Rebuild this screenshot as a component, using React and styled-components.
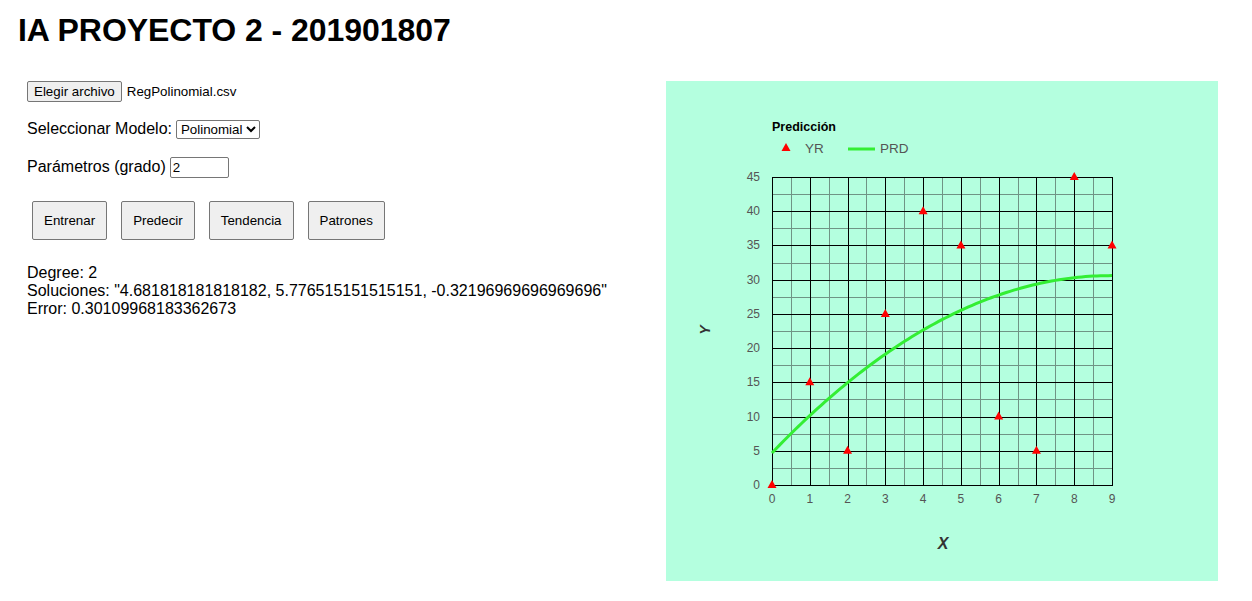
import React from 'react';
import styled, { createGlobalStyle } from 'styled-components';

const GlobalStyle = createGlobalStyle`
  body {
    margin: 0;
    background: #ffffff;
    font-family: 'Liberation Sans', Arial, sans-serif;
    color: #000;
  }
`;

const Page = styled.div`
  padding: 12px 18px 0;
`;

const Title = styled.h1`
  margin: 0;
  font-size: 32px;
  line-height: 37px;
  font-weight: bold;
  letter-spacing: -0.05px;
`;

const Main = styled.div`
  display: flex;
  flex-direction: row;
  justify-content: space-between;
  margin-top: 32px;
  padding-right: 16px;
`;

const Controls = styled.div`
  display: flex;
  flex-direction: column;
  padding-left: 9px;
`;

const Row = styled.div`
  display: flex;
  flex-direction: row;
  align-items: center;
  height: 20px;
  margin-bottom: 18px;
  font-size: 16px;
  gap: 4px;
`;

const NativeButton = styled.button`
  font-family: 'Liberation Sans', Arial, sans-serif;
  font-size: 13.33px;
  color: #000;
  background-color: #efefef;
  border: 1px solid #767676;
  border-radius: 2px;
  padding: 0 6px;
  height: 21px;
`;

const FileName = styled.span`
  font-size: 13.33px;
  margin-left: 1px;
`;

const Select = styled.select`
  font-family: 'Liberation Sans', Arial, sans-serif;
  font-size: 13.33px;
  height: 19px;
  width: 84px;
  padding: 0;
  border: 1px solid #767676;
  border-radius: 2px;
  background: #fff;
  color: #000;
`;

const NumberInput = styled.input`
  font-family: 'Liberation Sans', Arial, sans-serif;
  font-size: 13.33px;
  width: 59px;
  height: 21px;
  box-sizing: border-box;
  padding: 1px 2px;
  border: 1px solid #767676;
  border-radius: 2px;
`;

const ButtonRow = styled.div`
  display: flex;
  flex-direction: row;
  gap: 14px;
  margin: 6px 0 0 5px;
`;

const ActionButton = styled(NativeButton)`
  height: 39px;
  padding: 0 11px;
`;

const Results = styled.div`
  margin-top: 24px;
  font-size: 16px;
  line-height: 18px;
`;

const Panel = styled.div`
  width: 552px;
  height: 500px;
  background-color: #b4ffdf;
  svg {
    display: block;
  }
`;

const X0 = 106;
const X1 = 446;
const Y0 = 404;
const Y1 = 96;
const sx = (v) => X0 + (v * (X1 - X0)) / 9;
const sy = (v) => Y0 - (v * (Y0 - Y1)) / 45;
const snap = (p) => Math.round(p) + 0.5;

const points = [0, 15, 5, 25, 40, 35, 10, 5, 45, 35];
const coef = [4.681818181818182, 5.776515151515151, -0.32196969696969696];
const font = 'Liberation Sans, Arial, sans-serif';

const Triangle = ({ x, y }) => (
  <polygon points={`${x},${y - 5} ${x + 4.5},${y + 3} ${x - 4.5},${y + 3}`} fill="#ff0000" />
);

function Chart() {
  const halfX = [];
  for (let i = 0; i <= 18; i += 1) halfX.push(i / 2);
  const stepY = [];
  for (let i = 0; i <= 18; i += 1) stepY.push(i * 2.5);
  const curve = [];
  for (let i = 0; i <= 90; i += 1) {
    const x = i / 10;
    curve.push(`${sx(x).toFixed(2)},${sy(coef[0] + coef[1] * x + coef[2] * x * x).toFixed(2)}`);
  }
  const top = snap(Y1) - 0.5;
  const bottom = snap(Y0) + 0.5;
  const left = snap(X0) - 0.5;
  const right = snap(X1) + 0.5;
  return (
    <svg width="552" height="500" viewBox="0 0 552 500">
      <text x="106" y="50" fontSize="12.5" fontWeight="bold" fill="#000" fontFamily={font}>Predicción</text>
      <Triangle x={120} y={67} />
      <text x="139" y="72" fontSize="13.5" fill="#555" fontFamily={font}>YR</text>
      <line x1="182" y1="68" x2="209" y2="68" stroke="#33ee33" strokeWidth="3" />
      <text x="214" y="72" fontSize="13.5" fill="#555" fontFamily={font}>PRD</text>

      {halfX.filter((v) => v % 1 !== 0).map((v) => (
        <line key={`mx${v}`} x1={snap(sx(v))} y1={top} x2={snap(sx(v))} y2={bottom} stroke="#6f9485" strokeWidth="1" />
      ))}
      {stepY.filter((v) => v % 5 !== 0).map((v) => (
        <line key={`my${v}`} x1={left} y1={snap(sy(v))} x2={right} y2={snap(sy(v))} stroke="#6f9485" strokeWidth="1" />
      ))}
      {halfX.filter((v) => v % 1 === 0).map((v) => (
        <line key={`Mx${v}`} x1={snap(sx(v))} y1={top} x2={snap(sx(v))} y2={bottom} stroke="#000" strokeWidth="1" />
      ))}
      {stepY.filter((v) => v % 5 === 0).map((v) => (
        <line key={`My${v}`} x1={left} y1={snap(sy(v))} x2={right} y2={snap(sy(v))} stroke="#000" strokeWidth="1" />
      ))}

      {stepY.filter((v) => v % 5 === 0).map((v) => (
        <text key={`ty${v}`} x="94" y={sy(v) + 4} fontSize="12" fill="#555" textAnchor="end" fontFamily={font}>{v}</text>
      ))}
      {halfX.filter((v) => v % 1 === 0).map((v) => (
        <text key={`tx${v}`} x={sx(v)} y="422" fontSize="12" fill="#555" textAnchor="middle" fontFamily={font}>{v}</text>
      ))}

      <polyline points={curve.join(' ')} fill="none" stroke="#33ee33" strokeWidth="3" strokeLinejoin="round" />
      {points.map((v, i) => (
        <Triangle key={`p${i}`} x={sx(i)} y={sy(v)} />
      ))}

      <text x="277" y="468" fontSize="16" fontWeight="bold" fontStyle="italic" fill="#333" textAnchor="middle" fontFamily={font}>X</text>
      <text x="44" y="249" fontSize="14" fontWeight="bold" fontStyle="italic" fill="#333" textAnchor="middle" transform="rotate(-90 44 249)" fontFamily={font}>Y</text>
    </svg>
  );
}

export default function App() {
  return (
    <Page>
      <GlobalStyle />
      <Title>IA PROYECTO 2 - 201901807</Title>
      <Main>
        <Controls>
          <Row>
            <NativeButton>Elegir archivo</NativeButton>
            <FileName>RegPolinomial.csv</FileName>
          </Row>
          <Row>
            <span>Seleccionar Modelo:</span>
            <Select defaultValue="pol">
              <option value="pol">Polinomial</option>
            </Select>
          </Row>
          <Row>
            <span>Parámetros (grado)</span>
            <NumberInput type="text" defaultValue="2" />
          </Row>
          <ButtonRow>
            <ActionButton>Entrenar</ActionButton>
            <ActionButton>Predecir</ActionButton>
            <ActionButton>Tendencia</ActionButton>
            <ActionButton>Patrones</ActionButton>
          </ButtonRow>
          <Results>
            <div>Degree: 2</div>
            <div>Soluciones: "4.681818181818182, 5.776515151515151, -0.32196969696969696"</div>
            <div>Error: 0.30109968183362673</div>
          </Results>
        </Controls>
        <Panel>
          <Chart />
        </Panel>
      </Main>
    </Page>
  );
}
